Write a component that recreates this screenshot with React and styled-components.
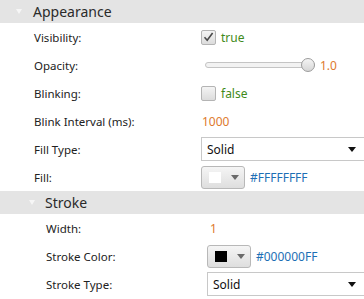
import React from "react";
import styled, { createGlobalStyle } from "styled-components";

const Global = createGlobalStyle`
  html, body {
    margin: 0;
    padding: 0;
    background: #ffffff;
  }
  body {
    font-family: "Noto Sans", "Open Sans", sans-serif;
    color: #222;
  }
`;

const Panel = styled.div`
  width: 364px;
  height: 299px;
  overflow: hidden;
  background: #fff;
`;

const Header = styled.div`
  height: 23px;
  display: flex;
  align-items: center;
  background: #e4e4e4;
  padding-left: ${p => p.indent}px;
  font-size: 14px;
  color: #2a2a2a;
`;

const Arrow = styled.span`
  width: 0;
  height: 0;
  border-left: 3.5px solid transparent;
  border-right: 3.5px solid transparent;
  border-top: 5px solid #f6f6f6;
  margin-right: ${p => p.gap}px;
`;

const Row = styled.div`
  height: 28px;
  display: grid;
  grid-template-columns: ${p => p.labelWidth}px 1fr;
  align-items: center;
  padding-left: ${p => p.indent}px;
`;

const Label = styled.span`
  font-size: 11.5px;
  color: #222;
`;

const Value = styled.div`
  display: flex;
  align-items: center;
  gap: 5px;
`;

const Check = styled.span`
  width: 15px;
  height: 15px;
  box-sizing: border-box;
  border: 1px solid #b4b4b4;
  border-radius: 2px;
  background: linear-gradient(#f4f4f4, #dcdcdc);
  display: flex;
  align-items: center;
  justify-content: center;
`;

const Bool = styled.span`
  font-size: 12px;
  color: #3f8a1a;
`;

const Number = styled.span`
  font-size: 12px;
  color: #de7a2e;
  margin-left: ${p => p.offset || 0}px;
`;

const Hex = styled.span`
  font-size: 12px;
  color: #1d6fb5;
`;

const Track = styled.div`
  position: relative;
  width: 108px;
  height: 4px;
  margin-left: 4px;
  border: 1px solid #c4c4c4;
  border-radius: 3px;
  background: #f2f2f2;
`;

const Thumb = styled.span`
  position: absolute;
  top: 50%;
  width: 14px;
  height: 14px;
  box-sizing: border-box;
  transform: translate(-50%, -50%);
  border: 1px solid #9c9c9c;
  border-radius: 50%;
  background: linear-gradient(#f4f4f4, #d6d6d6);
`;

const Select = styled.div`
  height: 24px;
  box-sizing: border-box;
  border: 1px solid #c8c8c8;
  background: #fff;
  display: flex;
  align-items: center;
  justify-content: space-between;
  padding: 0 9px 0 5px;
  font-size: 12px;
  color: #111;
  margin-right: -2px;
`;

const Caret = styled.span`
  width: 0;
  height: 0;
  border-left: 4px solid transparent;
  border-right: 4px solid transparent;
  border-top: 5px solid ${p => p.color};
`;

const ColorButton = styled.div`
  width: 44px;
  height: 23px;
  box-sizing: border-box;
  border: 1px solid #b8b8b8;
  border-radius: 3px;
  background: linear-gradient(#f5f5f5, #dedede);
  display: flex;
  align-items: center;
  padding-left: 7px;
  gap: 10px;
`;

const Swatch = styled.span`
  width: 12px;
  height: 11px;
  background: ${p => p.color};
`;

function Checkbox({ checked }) {
  return (
    <Check>
      {checked && (
        <svg width="11" height="10" viewBox="0 0 11 10">
          <path d="M1.5 5.2 L4.2 8.2 L9.6 1" fill="none" stroke="#4a4a4a" strokeWidth="1.6" />
        </svg>
      )}
    </Check>
  );
}

function ColorPicker({ color, hex }) {
  return (
    <Value>
      <ColorButton>
        <Swatch color={color} />
        <Caret color="#6a6a6a" />
      </ColorButton>
      <Hex>{hex}</Hex>
    </Value>
  );
}

function Dropdown({ value }) {
  return (
    <Select>
      <span>{value}</span>
      <Caret color="#111" />
    </Select>
  );
}

export default function App() {
  const outer = { indent: 34, labelWidth: 167 };
  const inner = { indent: 46, labelWidth: 161 };
  const opacity = 1.0;
  return (
    <Panel>
      <Global />
      <Header indent={16}>
        <Arrow gap={11} />
        Appearance
      </Header>
      <Row {...outer}>
        <Label>Visibility:</Label>
        <Value>
          <Checkbox checked />
          <Bool>true</Bool>
        </Value>
      </Row>
      <Row {...outer}>
        <Label>Opacity:</Label>
        <Value>
          <Track>
            <Thumb style={{ left: `${opacity * 94}%` }} />
          </Track>
          <Number offset={0}>1.0</Number>
        </Value>
      </Row>
      <Row {...outer}>
        <Label>Blinking:</Label>
        <Value>
          <Checkbox />
          <Bool>false</Bool>
        </Value>
      </Row>
      <Row {...outer}>
        <Label>Blink Interval (ms):</Label>
        <Value>
          <Number offset={1}>1000</Number>
        </Value>
      </Row>
      <Row {...outer}>
        <Label>Fill Type:</Label>
        <Dropdown value="Solid" />
      </Row>
      <Row {...outer}>
        <Label>Fill:</Label>
        <ColorPicker color="#ffffff" hex="#FFFFFFFF" />
      </Row>
      <Header indent={29}>
        <Arrow gap={10} />
        Stroke
      </Header>
      <Row {...inner}>
        <Label>Width:</Label>
        <Value>
          <Number offset={3}>1</Number>
        </Value>
      </Row>
      <Row {...inner}>
        <Label>Stroke Color:</Label>
        <ColorPicker color="#000000" hex="#000000FF" />
      </Row>
      <Row {...inner}>
        <Label>Stroke Type:</Label>
        <Dropdown value="Solid" />
      </Row>
    </Panel>
  );
}
